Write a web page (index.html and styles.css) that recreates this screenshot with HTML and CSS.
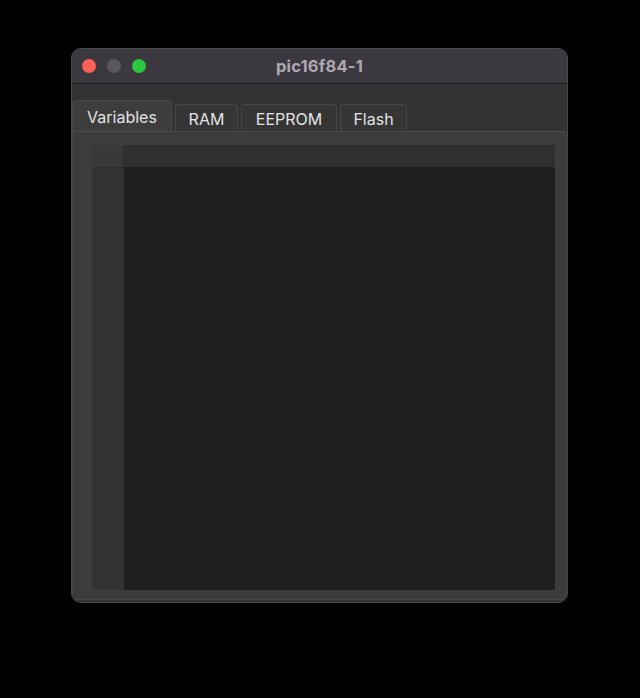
FILE: index.html
```html
<html>
<head>
	<title>pic16f84-1</title>
	<meta charset='UTF-8'>
	<link rel="stylesheet" href="styles.css">
</head>
<body>
	<div class='desk'>
		<div class='win'>
			<div class='titlebar'>
				<div class='lights'>
					<span class='light red'></span>
					<span class='light grey'></span>
					<span class='light green'></span>
				</div>
				<div class='title'>pic16f84-1</div>
			</div>
			<div class='content'>
				<div class='tabs'>
					<div class='tab sel'>Variables</div>
					<div class='tab w-ram'>RAM</div>
					<div class='tab w-ee'>EEPROM</div>
					<div class='tab w-fl'>Flash</div>
				</div>
				<div class='pane'>
					<div class='table'>
						<div class='head'>
							<div class='corner'></div>
							<div class='colhead'></div>
						</div>
						<div class='rows'>
							<div class='rowhead'></div>
							<div class='cells'></div>
						</div>
					</div>
				</div>
			</div>
		</div>
	</div>
</body>
</html>
```
FILE: styles.css
```css
body {
	margin: 0;
	background: #000000;
	font-family: "Inter", "Liberation Sans", sans-serif;
}
.desk {
	padding: 48px 0 0 71px;
}
.win {
	width: 495px;
	height: 553px;
	border: 1px solid #4a4a4c;
	border-radius: 10px;
	background: #323232;
	overflow: hidden;
	display: flex;
	flex-direction: column;
}
.titlebar {
	height: 34px;
	background: #3c3840;
	border-bottom: 1px solid #1e1e20;
	position: relative;
	display: flex;
	align-items: center;
	justify-content: center;
}
.lights {
	position: absolute;
	left: 10px;
	top: 10px;
	display: flex;
	gap: 11px;
}
.light {
	width: 14px;
	height: 14px;
	border-radius: 50%;
}
.red { background: #fe5f57; }
.grey { background: #5a575c; }
.green { background: #2ac840; }
.title {
	color: #aea9b1;
	font-weight: bold;
	font-size: 16.5px;
	letter-spacing: 0.2px;
}
.content {
	flex: 1;
	display: flex;
	flex-direction: column;
	padding: 16px 1px 2px 0;
}
.tabs {
	display: flex;
	align-items: flex-end;
	gap: 3px;
	height: 31px;
}
.tab {
	height: 27px;
	box-sizing: border-box;
	border: 1px solid #484848;
	border-bottom: none;
	border-radius: 4px 4px 0 0;
	background: #353535;
	color: #e2e2e2;
	font-size: 16px;
	display: flex;
	align-items: center;
	justify-content: center;
	padding-top: 1px;
}
.tab.sel {
	width: 100px;
	height: 31px;
	background: #3d3d3d;
	border-color: #474747;
	padding-top: 1px;
	padding-bottom: 0;
}
.w-ram { width: 63px; }
.w-ee { width: 96px; }
.w-fl { width: 67px; }
.pane {
	flex: 1;
	background: #3c3c3c;
	border: 1px solid #464646;
	border-top-color: #4a4a4a;
	padding: 13px 10px 9px 19px;
	display: flex;
}
.table {
	flex: 1;
	display: flex;
	flex-direction: column;
	background: #1f1f1f;
}
.head {
	display: flex;
	height: 22px;
}
.corner {
	width: 32px;
	background: #383838;
	border-right: 1px solid #2e2e2e;
	box-sizing: border-box;
}
.colhead {
	flex: 1;
	background: #2f2f2f;
}
.rows {
	flex: 1;
	display: flex;
}
.rowhead {
	width: 32px;
	background: #333333;
	border-top: 1px solid #2c2c2c;
}
.cells {
	flex: 1;
	background: #1f1f1f;
}
```
